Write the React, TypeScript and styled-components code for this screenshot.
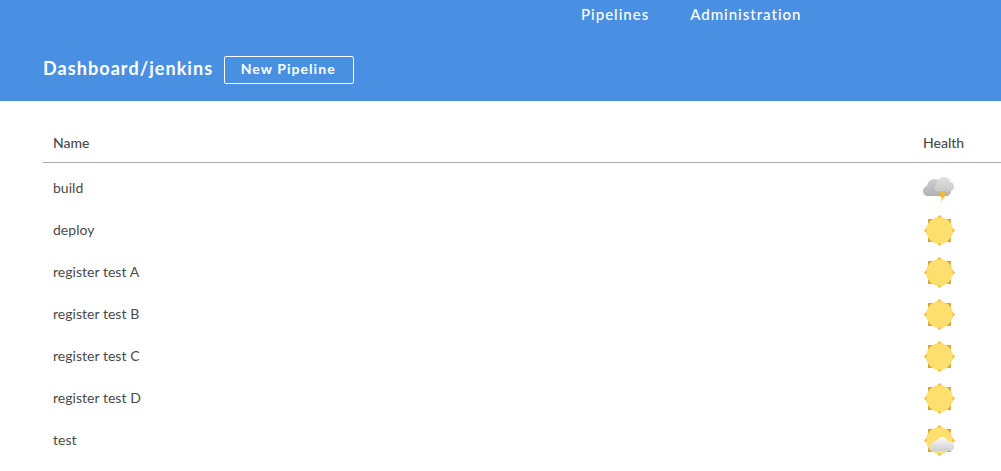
import React from "react";
import styled, { createGlobalStyle } from "styled-components";

const GlobalStyle = createGlobalStyle`
  html, body {
    margin: 0;
    padding: 0;
    background: #fff;
    overflow: hidden;
  }
  body {
    font-family: Lato, "Liberation Sans", sans-serif;
    color: #4a4a4a;
  }
`;

const Page = styled.div`
  width: 1001px;
  height: 471px;
  overflow: hidden;
`;

const Header = styled.header`
  height: 101px;
  background: #4a90e2;
  color: #fff;
  padding: 0 0 0 43px;
  box-sizing: border-box;
`;

const Nav = styled.nav`
  height: 28px;
  display: flex;
  align-items: center;
  gap: 41px;
  padding-left: 538px;
`;

const NavLink = styled.a`
  font-size: 15px;
  font-weight: 500;
  letter-spacing: 1px;
  color: #fff;
`;

const TitleRow = styled.div`
  display: flex;
  align-items: center;
  gap: 11px;
  margin-top: 28px;
`;

const Title = styled.h1`
  margin: 0 0 4px;
  font-size: 18px;
  font-weight: 700;
  letter-spacing: 1.07px;
  line-height: 24px;
`;

const NewButton = styled.button`
  width: 130px;
  height: 28px;
  padding: 0 2px 3px 0;
  background: transparent;
  border: 1px solid #fff;
  border-radius: 2px;
  color: #fff;
  font-family: inherit;
  font-size: 14px;
  font-weight: 700;
  letter-spacing: 1.05px;
`;

const Table = styled.div`
  margin: 21px 0 0 43px;
`;

const HeaderRow = styled.div`
  display: grid;
  grid-template-columns: 1fr 78px;
  height: 40px;
  align-items: center;
  padding-left: 10px;
  margin-bottom: 4px;
  border-bottom: 1px solid #a9a9a9;
  font-size: 14px;
  color: #4a4a4a;
  font-weight: 500;
`;

const Row = styled.div`
  display: grid;
  grid-template-columns: 1fr 78px;
  height: 42px;
  align-items: center;
  padding-left: 10px;
  font-size: 14px;
  letter-spacing: 0.03px;
  color: #4a4a4a;
`;

const RowName = styled.span`
  margin-bottom: 2px;
`;

const IconSvg = styled.svg.attrs({ width: 32, height: 32, viewBox: "0 0 32 32" })`
  display: block;
`;

const SunBody = () => (
  <>
    <polygon points="16.5,1 21.5,6 11.500,6" fill="#f4b33a" />
    <polygon points="16.5,32 21.5,27 11.500,27" fill="#f4b33a" />
    <polygon points="1,16.500 6,11.500 6,21.500" fill="#f4b33a" />
    <polygon points="32,16.500 27,11.500 27,21.500" fill="#f4b33a" />
    <rect x="5" y="5" width="23" height="23" fill="#cfa93c" />
    <circle cx="16.500" cy="16.500" r="13.300" fill="#fddf6d" />
  </>
);

const SunIcon = () => (
  <IconSvg>
    <SunBody />
  </IconSvg>
);

const StormIcon = () => (
  <IconSvg>
    <defs>
      <linearGradient id="stormBack" x1="0" y1="0" x2="0" y2="1">
        <stop offset="0" stopColor="#d0d0d0" />
        <stop offset="1" stopColor="#b0b0b0" />
      </linearGradient>
      <linearGradient id="stormFront" x1="0" y1="0" x2="0" y2="1">
        <stop offset="0" stopColor="#e0e0e0" />
        <stop offset="1" stopColor="#cacaca" />
      </linearGradient>
    </defs>
    <path
      d="M5 24c-3 0-5-2.300-5-5 0-2.600 1.800-4.600 4-5 .6-4 3.500-7 7.500-7 4.500 0 8 3 9 7h3c2.500 0 4.500 2.200 4.500 5 0 2.800-2 5-4.500 5z"
      fill="url(#stormBack)"
    />
    <path
      d="M15.500 19.500c-2.200 0-3.800-1.700-3.800-3.900 0-1.800 1-3.100 2-3.600C14.300 8 17 5 20.800 5c3.500 0 5.800 2.300 6.400 5 2.200.3 3.800 2.300 3.800 4.600 0 2.800-2.100 4.900-4.800 4.900z"
      fill="url(#stormFront)"
    />
    <polygon points="17.500,19 23,19 21,22.300 23.500,22.300 18,29.500 19,24.800 16.300,24.800" fill="#f5b53a" />
  </IconSvg>
);

const PartlyIcon = () => (
  <IconSvg>
    <defs>
      <linearGradient id="partlyCloud" x1="0" y1="0" x2="0" y2="1">
        <stop offset="0" stopColor="#fafafa" />
        <stop offset="1" stopColor="#cfcfcf" />
      </linearGradient>
    </defs>
    <SunBody />
    <path
      d="M10.500 27c-2.200 0-3.800-1.700-3.800-3.900 0-2.200 1.600-3.800 3.500-4 .6-1.800 2.200-2.900 4-2.500C15.200 14.500 17 13 19.200 13c2.700 0 4.900 2 5.100 4.700.6-.3 1.100-.4 1.700-.4 2.800 0 5.200 2.200 5.200 4.900 0 2.700-2.300 4.800-4.900 4.800z"
      fill="url(#partlyCloud)"
    />
  </IconSvg>
);

const rows: { name: string; icon: React.ReactNode }[] = [
  { name: "build", icon: <StormIcon /> },
  { name: "deploy", icon: <SunIcon /> },
  { name: "register test A", icon: <SunIcon /> },
  { name: "register test B", icon: <SunIcon /> },
  { name: "register test C", icon: <SunIcon /> },
  { name: "register test D", icon: <SunIcon /> },
  { name: "test", icon: <PartlyIcon /> },
];

export default function App() {
  return (
    <Page>
      <GlobalStyle />
      <Header>
        <Nav>
          <NavLink>Pipelines</NavLink>
          <NavLink>Administration</NavLink>
        </Nav>
        <TitleRow>
          <Title>Dashboard/jenkins</Title>
          <NewButton>New Pipeline</NewButton>
        </TitleRow>
      </Header>
      <Table>
        <HeaderRow>
          <span>Name</span>
          <span>Health</span>
        </HeaderRow>
        {rows.map((row) => (
          <Row key={row.name}>
            <RowName>{row.name}</RowName>
            {row.icon}
          </Row>
        ))}
      </Table>
    </Page>
  );
}
